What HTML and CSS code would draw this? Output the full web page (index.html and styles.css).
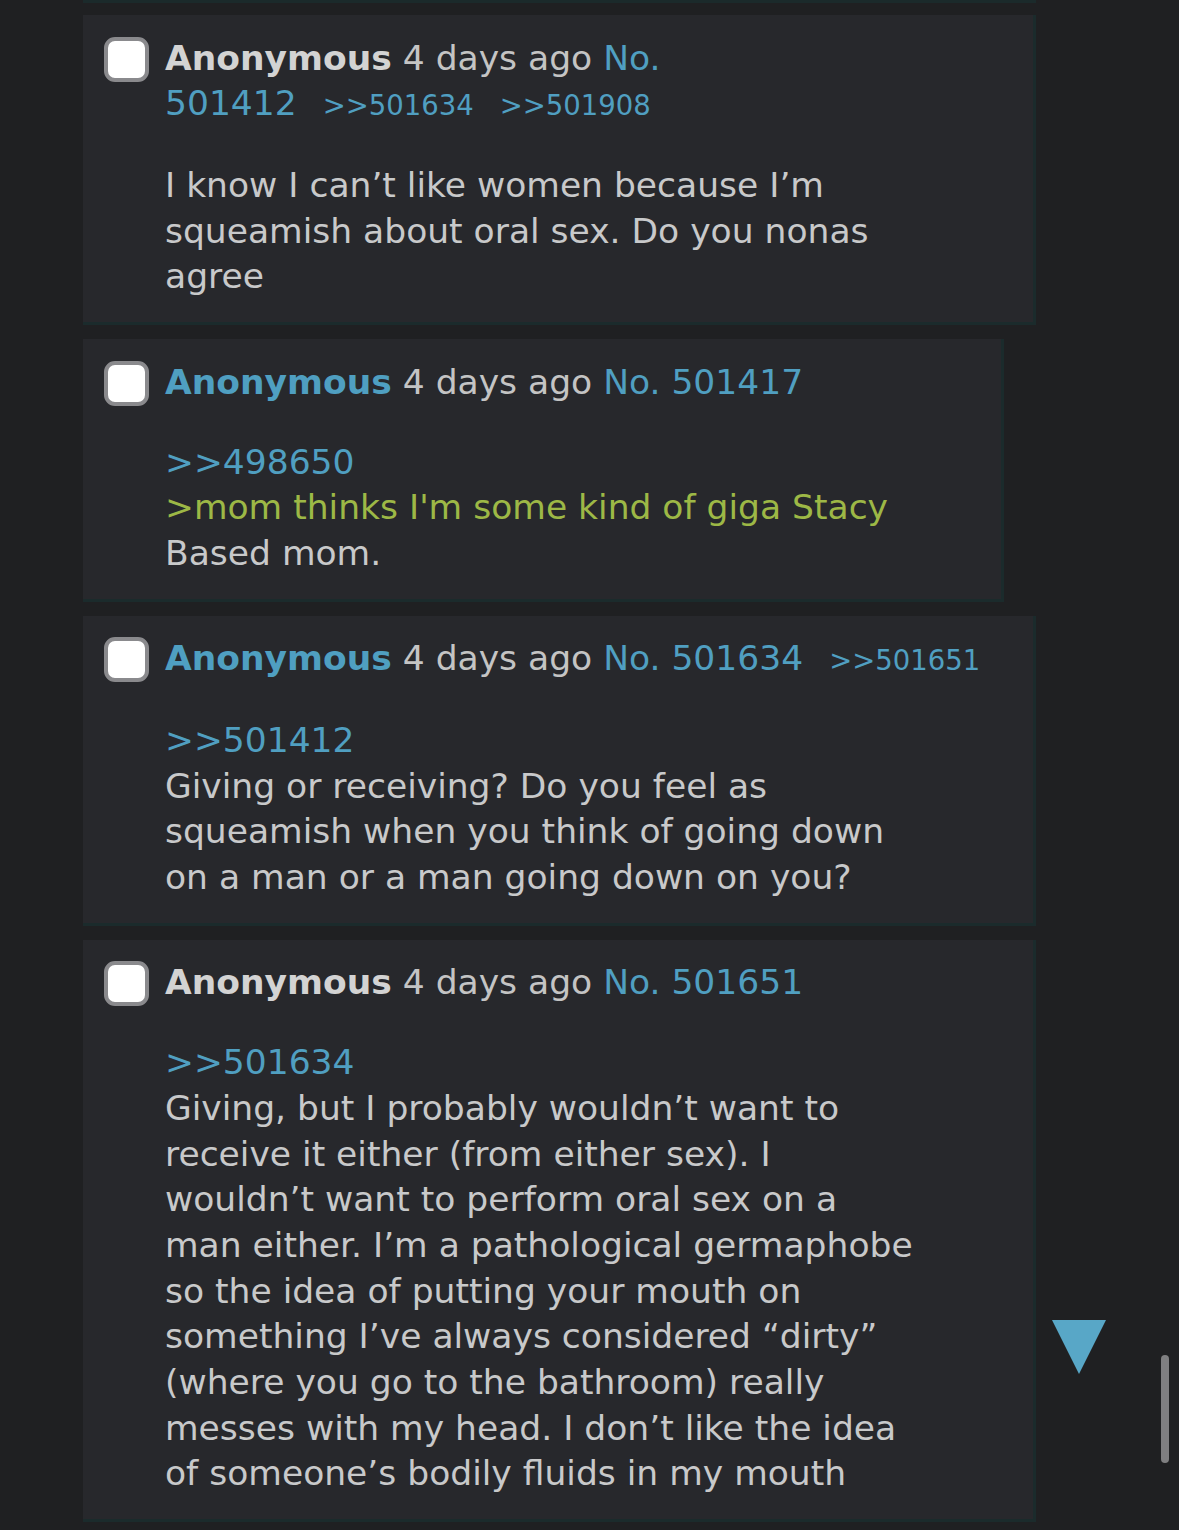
FILE: index.html
```html
<!DOCTYPE html>
<html lang="en">
<head>
<meta charset="utf-8">
<title>Thread</title>
<link rel="stylesheet" href="styles.css">
</head>
<body>
<div class="thread">
  <div class="post-tail"></div>

  <div class="post">
    <span class="check"></span>
    <div class="head">
      <span class="name">Anonymous</span> <span class="time">4 days ago</span> <a class="no">No.</a> <span class="nums"><a class="num">501412</a><a class="backlink">&gt;&gt;501634</a><a class="backlink">&gt;&gt;501908</a></span>
    </div>
    <blockquote class="body">I know I can’t like women because I’m squeamish about oral sex. Do you nonas agree</blockquote>
  </div>

  <div class="post">
    <span class="check"></span>
    <div class="head">
      <span class="name you">Anonymous</span> <span class="time">4 days ago</span> <a class="no">No.</a> <span class="nums"><a class="num">501417</a></span>
    </div>
    <blockquote class="body"><a class="quotelink">&gt;&gt;498650</a><br><span class="green">&gt;mom thinks I'm some kind of giga Stacy</span><br>Based mom.</blockquote>
  </div>

  <div class="post">
    <span class="check"></span>
    <div class="head">
      <span class="name you">Anonymous</span> <span class="time">4 days ago</span> <a class="no">No.</a> <span class="nums"><a class="num">501634</a><a class="backlink">&gt;&gt;501651</a></span>
    </div>
    <blockquote class="body"><a class="quotelink">&gt;&gt;501412</a><br>Giving or receiving? Do you feel as squeamish when you think of going down on a man or a man going down on you?</blockquote>
  </div>

  <div class="post">
    <span class="check"></span>
    <div class="head">
      <span class="name">Anonymous</span> <span class="time">4 days ago</span> <a class="no">No.</a> <span class="nums"><a class="num">501651</a></span>
    </div>
    <blockquote class="body"><a class="quotelink">&gt;&gt;501634</a><br>Giving, but I probably wouldn’t want to receive it either (from either sex). I wouldn’t want to perform oral sex on a man either. I’m a pathological germaphobe so the idea of putting your mouth on something I’ve always considered “dirty” (where you go to the bathroom) really messes with my head. I don’t like the idea of someone’s bodily fluids in my mouth</blockquote>
  </div>
</div>

<svg class="scroll-down" width="56" height="56" viewBox="0 0 56 56" aria-hidden="true"><polygon points="1,1 55,1 28,55" fill="#58a7c7"/></svg>
<div class="scrollbar"></div>
</body>
</html>
```
FILE: styles.css
```css
html, body {
  margin: 0;
  padding: 0;
  background: #1f2022;
  height: 100%;
  overflow: hidden;
}

body {
  font-family: "DejaVu Sans", Verdana, sans-serif;
  font-size: 34.5px;
  line-height: 45.7px;
  color: #c8c9ca;
}

.thread {
  display: flex;
  flex-direction: column;
  align-items: flex-start;
  padding-left: 83px;
}

.post-tail {
  width: 953px;
  height: 0;
  border-bottom: 3px solid #1b2a2b;
  margin-bottom: 12px;
}

.post {
  box-sizing: border-box;
  max-width: 953px;
  display: grid;
  grid-template-columns: 62px auto;
  background: #27282c;
  border-right: 3px solid #1b2b2c;
  border-bottom: 3px solid #1b2b2c;
  padding: 20.5px 30px 22px 21px;
}

.post + .post {
  margin-top: 14px;
}

.check {
  grid-column: 1;
  grid-row: 1;
  box-sizing: border-box;
  width: 45px;
  height: 45px;
  margin-top: 1px;
  background: #ffffff;
  border: 4px solid #8a8a8d;
  border-radius: 11px;
}

.head {
  grid-column: 2;
  grid-row: 1;
  color: #c4c4c4;
  margin-left: -1px;
}

.name {
  font-weight: bold;
  color: #d3d3d3;
}

.name.you {
  color: #4f9fc1;
}

.no, .num, .backlink, .quotelink {
  color: #509fc1;
  text-decoration: none;
}

.nums {
  display: inline-block;
  white-space: nowrap;
}

.backlink {
  font-size: 27.5px;
  margin-left: 26px;
}

.body {
  grid-column: 2;
  grid-row: 2;
  margin: 34px 83px 0 -1px;
}

.green {
  color: #9db846;
}

.scroll-down {
  position: fixed;
  left: 1051px;
  top: 1319px;
}

.scrollbar {
  position: fixed;
  left: 1161px;
  top: 1355px;
  width: 8px;
  height: 108px;
  border-radius: 4px;
  background: #7f7f81;
}
```
